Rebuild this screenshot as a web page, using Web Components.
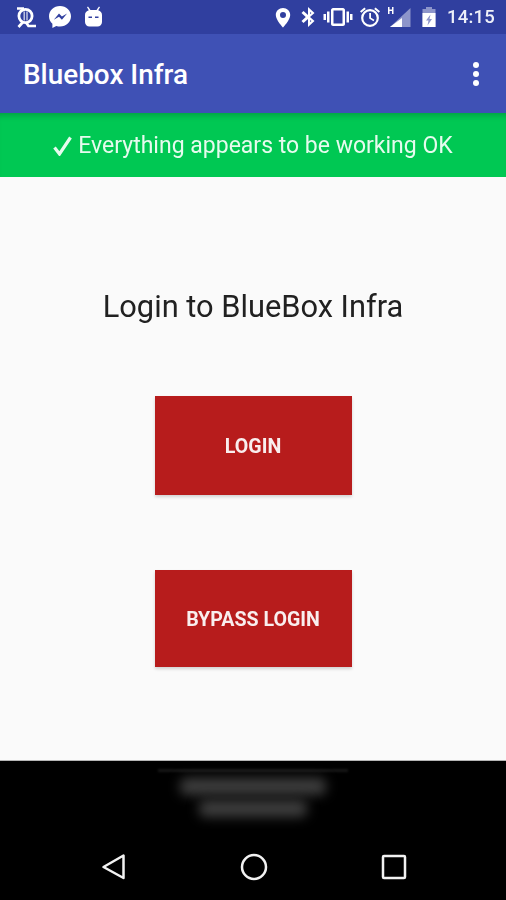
<!DOCTYPE html>
<html>
<head>
<meta charset="utf-8">
<title>Bluebox Infra</title>
<style>
  html, body { margin: 0; padding: 0; }
  body { width: 506px; height: 900px; overflow: hidden; font-family: Roboto, "Liberation Sans", sans-serif; background: #fafafa; }
  bb-app { height: 900px; }
</style>
</head>
<body>
<bb-app>
  <bb-statusbar slot="top" time="14:15"></bb-statusbar>
  <bb-appbar slot="top" title="Bluebox Infra"></bb-appbar>
  <bb-banner slot="top">Everything appears to be working OK</bb-banner>
  <bb-login heading="Login to BlueBox Infra">
    <bb-button>Login</bb-button>
    <bb-button short>Bypass Login</bb-button>
  </bb-login>
  <bb-navbar slot="bottom"></bb-navbar>
</bb-app>

<script>
// page frame: header stack, content, system nav
class BBApp extends HTMLElement {
  constructor() {
    super();
    this.attachShadow({ mode: "open" });
    this.shadowRoot.innerHTML = `
      <style>
        /* the reference is an upscaled capture, everything is a little soft */
        :host { display: flex; flex-direction: column; filter: blur(.5px); }
        main { flex: 1; min-height: 0; display: flex; }
      </style>
      <slot name="top"></slot>
      <main><slot></slot></main>
      <slot name="bottom"></slot>
    `;
  }
}
customElements.define("bb-app", BBApp);

class BBStatusbar extends HTMLElement {
  constructor() {
    super();
    this.attachShadow({ mode: "open" });
    this.shadowRoot.innerHTML = `
      <style>
        :host { display: flex; align-items: center; height: 34px; background: #303f9f; color: #fff; padding: 0 11px 0 15px; justify-content: space-between; box-sizing: border-box; }
        .group { display: flex; align-items: center; }
        svg { display: block; fill: #fff; }
        .left { gap: 11px; }
        .time { font: 500 18.500px Roboto, sans-serif; margin-left: 10px; color: #eef0f9; letter-spacing: .2px; }
      </style>
      <div class="group left">
        <svg width="22" height="24" viewBox="0 0 22 24">
          <g fill="none" stroke="#fff">
            <circle cx="10.500" cy="11" r="6.600" stroke-width="2.800"/>
            <path d="M9.200 6.500v9M12 6.500v9" stroke-width="1.300" stroke-opacity=".8"/>
            <path d="M2 3.500h7M8 17l-4.500 5M11 17.500l2.500 3.500H21" stroke-width="2.700"/>
          </g>
        </svg>
        <svg width="24" height="26" viewBox="0 0 24 26">
          <path d="M12 2C5.800 2 1 6.500 1 12.300c0 3 1.300 5.600 3.400 7.400V24l3.900-2.100c1.200.4 2.400.6 3.700.6 6.200 0 11-4.500 11-10.200S18.200 2 12 2z"/>
          <path d="M5.800 15.800 11 9.600l2.900 2.900 5.200-2.900-5.200 6.200-2.900-3z" fill="#303f9f"/>
        </svg>
        <svg width="21" height="24" viewBox="0 0 21 24">
          <path d="M5 1.500 7.500 5h6L16 1.500 17 2.300 15.200 5.300C17.500 6 19 7.700 19 10v7c0 2.700-2 4.500-4.500 4.500h-8C4 21.500 2 19.700 2 17v-7c0-2.300 1.500-4 3.800-4.700L4 2.300z"/>
          <rect x="5.500" y="11.500" width="3.500" height="1.500" fill="#303f9f"/>
          <rect x="12" y="11.500" width="3.500" height="1.500" fill="#303f9f"/>
        </svg>
      </div>
      <div class="group right">
        <svg width="18" height="24" viewBox="0 0 18 24">
          <path fill-rule="evenodd" d="M9 3C5 3 1.800 6.100 1.800 10 1.800 15 9 22.500 9 22.500s7.200-7.500 7.200-12.500C16.200 6.100 13 3 9 3zm0 10a3 3 0 1 1 0-6 3 3 0 0 1 0 6z"/>
        </svg>
        <svg width="16" height="24" viewBox="0 0 16 24" style="margin-left:8px">
          <path d="M8 2v8L3.500 6 1.500 8 5.800 12 1.500 16l2 2L8 14v8l6.500-6L10 12l4.500-4zm2.200 5 1.200 1-1.200 1.200zm0 8 1.200 1-1.200 1.200z" fill-rule="evenodd"/>
        </svg>
        <svg width="30" height="24" viewBox="0 0 30 24" style="margin-left:7px">
          <path fill-rule="evenodd" d="M10 3h10c1 0 2 1 2 2v14c0 1-1 2-2 2H10c-1 0-2-1-2-2V5c0-1 1-2 2-2zm.500 2.500v13h9v-13z"/>
          <rect x="4" y="6.500" width="2.500" height="11"/><rect x="23.500" y="6.500" width="2.500" height="11"/>
          <rect x="0.500" y="9" width="2.500" height="6"/><rect x="27" y="9" width="2.500" height="6"/>
        </svg>
        <svg width="22" height="24" viewBox="0 0 22 24" style="margin-left:6px">
          <circle cx="11" cy="13" r="7.800" fill="none" stroke="#fff" stroke-width="2.200"/>
          <path d="M10.200 8h1.800v4.700l3.400 2-.9 1.500-4.300-2.600z"/>
          <path d="M1 6.300 5.500 2.500 6.800 4 2.300 7.800zM21 6.300 16.500 2.500 15.200 4l4.500 3.800z"/>
        </svg>
        <svg width="24" height="24" viewBox="0 0 24 24" style="margin-left:6px">
          <path d="M23.500 3v19H3z" fill="#fff" fill-opacity=".45"/>
          <path d="M15 13v9H3z"/>
          <path d="M1 2h1.500v2.500h2.500V2h1.500v7H5V6H2.500v3H1z"/>
        </svg>
        <svg width="16" height="24" viewBox="0 0 16 24" style="margin-left:10px">
          <path d="M5 2h6v2h3.500v18H1.500V4H5z" fill="#fff" fill-opacity=".45"/>
          <path fill-rule="evenodd" d="M1.500 8h13v14h-13zM9.500 9.500 5 15.500h2.500L6.500 20.500 11 14H8.500z"/>
        </svg>
        <span class="time">${this.getAttribute("time") ?? ""}</span>
      </div>
    `;
  }
}
customElements.define("bb-statusbar", BBStatusbar);

class BBAppbar extends HTMLElement {
  constructor() {
    super();
    this.attachShadow({ mode: "open" });
    this.shadowRoot.innerHTML = `
      <style>
        :host { display: flex; align-items: center; justify-content: space-between; height: 79px; background: #3f51b5; color: #fff; padding: 0 27px 0 23px; box-sizing: border-box; position: relative; z-index: 1; }
        .title { font: 500 27.900px Roboto, sans-serif; padding-top: 2px; }
        .more { display: flex; flex-direction: column; gap: 3px; }
        .more i { display: block; width: 6px; height: 6px; border-radius: 50%; background: #fff; }
      </style>
      <span class="title">${this.getAttribute("title") ?? ""}</span>
      <div class="more"><i></i><i></i><i></i></div>
    `;
  }
}
customElements.define("bb-appbar", BBAppbar);

class BBBanner extends HTMLElement {
  constructor() {
    super();
    this.attachShadow({ mode: "open" });
    this.shadowRoot.innerHTML = `
      <style>
        :host { display: flex; align-items: center; justify-content: center; gap: 6px; height: 64px; background: #00c853; color: #e6fbee; font: 400 23px Roboto, sans-serif; box-shadow: inset 0 7px 6px -5px rgba(0,0,0,.22); padding-top: 1px; box-sizing: border-box; }
        svg { display: block; fill: none; stroke: #e6fbee; stroke-width: 3.200; }
      </style>
      <svg width="19" height="20" viewBox="0 0 19 20"><path d="M1.500 11.500 6.500 18 17.500 1.500"/></svg>
      <span><slot></slot></span>
    `;
  }
}
customElements.define("bb-banner", BBBanner);

class BBLogin extends HTMLElement {
  constructor() {
    super();
    this.attachShadow({ mode: "open" });
    this.shadowRoot.innerHTML = `
      <style>
        :host { display: flex; flex: 1; flex-direction: column; align-items: center; background: #fafafa; padding-top: 110px; box-sizing: border-box; }
        h1 { margin: 0 0 69px; font: 400 30.800px/40px Roboto, sans-serif; color: #212121; }
        .actions { display: flex; flex-direction: column; gap: 75px; }
      </style>
      <h1>${this.getAttribute("heading") ?? ""}</h1>
      <div class="actions"><slot></slot></div>
    `;
  }
}
customElements.define("bb-login", BBLogin);

class BBButton extends HTMLElement {
  constructor() {
    super();
    this.attachShadow({ mode: "open" });
    this.shadowRoot.innerHTML = `
      <style>
        :host { display: flex; align-items: center; justify-content: center; width: 197px; height: 99px; padding-top: 2px; box-sizing: border-box; background: #b71c1c; color: #f9eeee; font: 700 19.600px Roboto, sans-serif; text-transform: uppercase; box-shadow: 0 2px 3px rgba(0,0,0,.16); }
        :host([short]) { height: 97px; }
      </style>
      <slot></slot>
    `;
  }
}
customElements.define("bb-button", BBButton);

class BBNavbar extends HTMLElement {
  constructor() {
    super();
    this.attachShadow({ mode: "open" });
    this.shadowRoot.innerHTML = `
      <style>
        :host { display: flex; flex-direction: column; height: 140px; background: #000; border-top: 1px solid #b5b5b5; box-sizing: border-box; }
        .ad { height: 71px; display: flex; flex-direction: column; align-items: center; padding-top: 8px; box-sizing: border-box; }
        .rule { width: 190px; height: 3px; background: #161616; filter: blur(1px); margin-bottom: 6px; }
        .blur { background: #3e3e3e; height: 17px; border-radius: 6px; filter: blur(6px); margin-bottom: 5px; }
        .keys { flex: 1; display: flex; align-items: flex-start; justify-content: center; position: relative; left: 1px; }
        .keys div { width: 140px; display: flex; justify-content: center; padding-top: 21px; }
        svg { display: block; fill: none; stroke: #f2f2f2; stroke-width: 2.500; stroke-linejoin: round; }
      </style>
      <div class="ad">
        <div class="rule"></div>
        <div class="blur" style="width:146px"></div>
        <div class="blur" style="width:108px"></div>
      </div>
      <div class="keys">
        <div><svg width="28" height="28" viewBox="0 0 28 28"><path d="M23.500 2.500v22.500L3.500 14z"/></svg></div>
        <div><svg width="28" height="28" viewBox="0 0 28 28"><circle cx="14" cy="14" r="12"/></svg></div>
        <div><svg width="28" height="28" viewBox="0 0 28 28"><rect x="3" y="3" width="22" height="22" rx="1"/></svg></div>
      </div>
    `;
  }
}
customElements.define("bb-navbar", BBNavbar);
</script>
</body>
</html>
